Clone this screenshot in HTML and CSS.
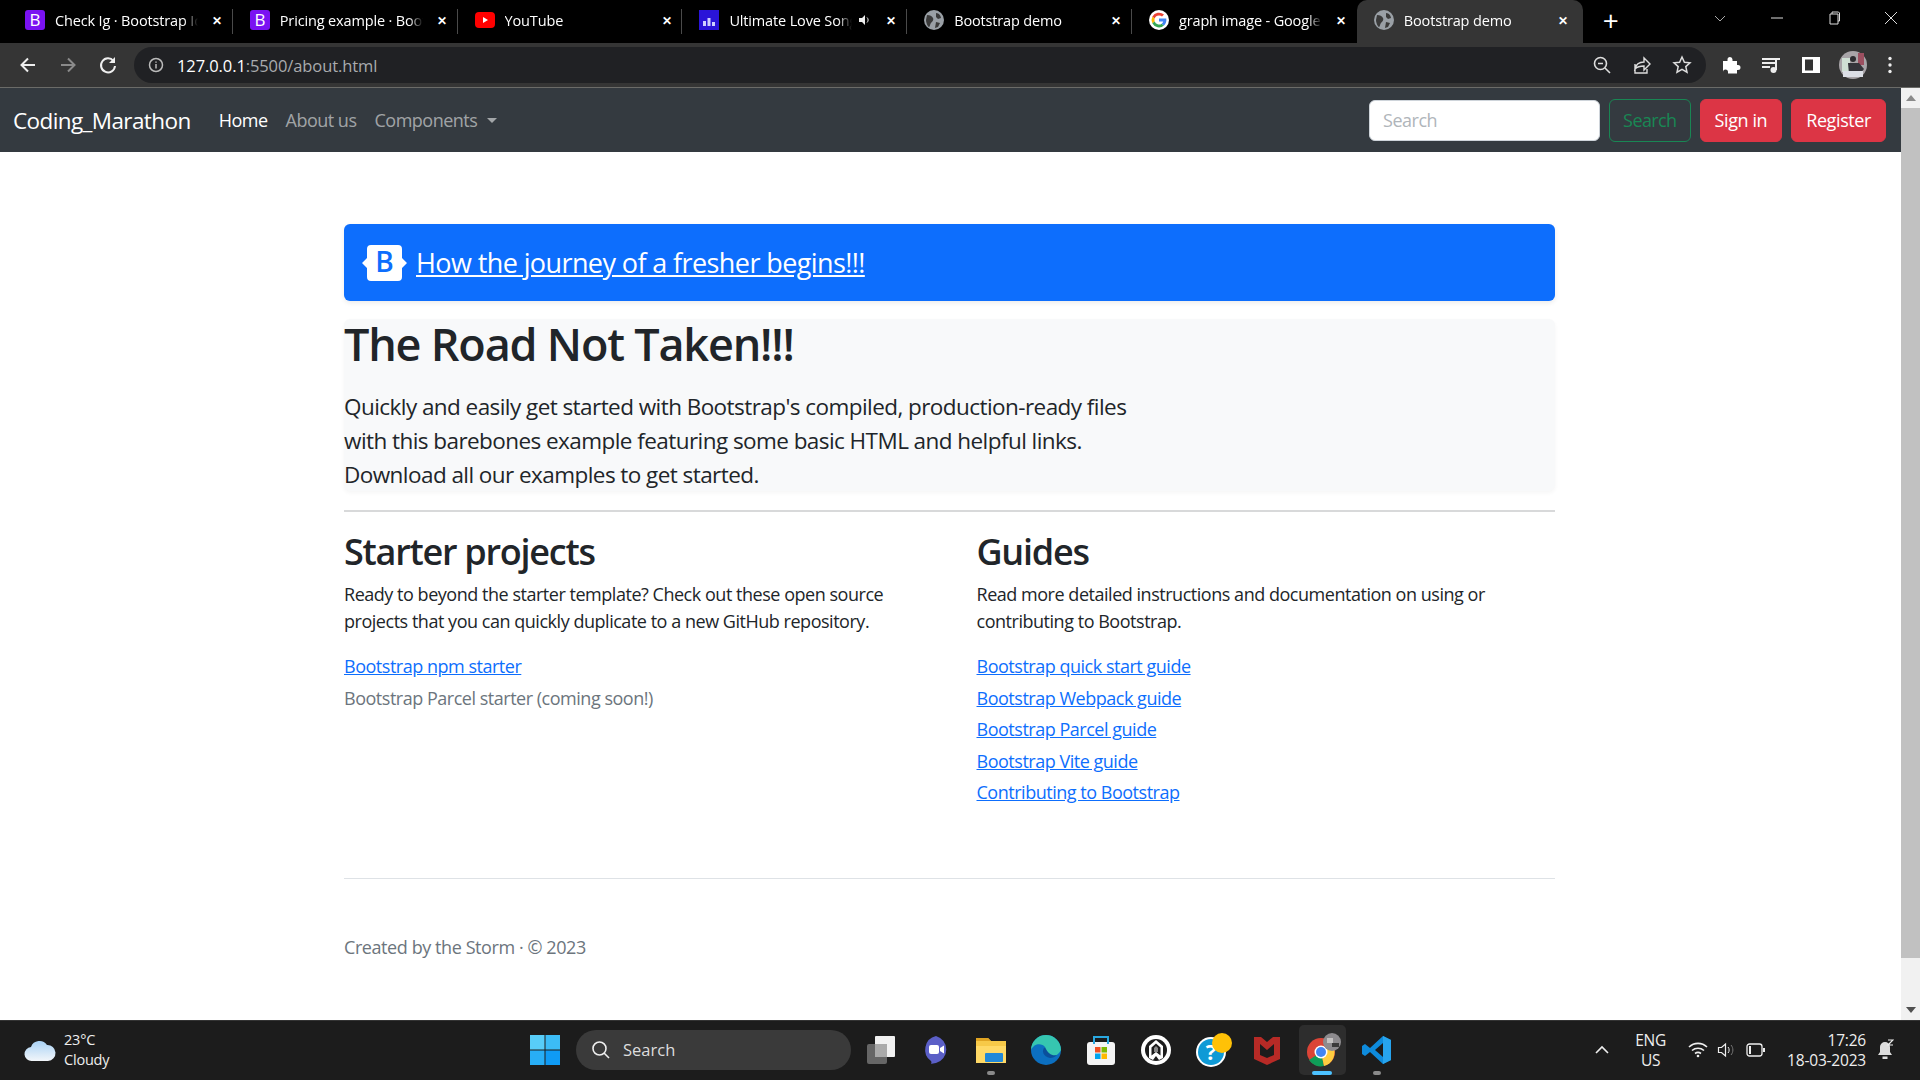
FILE: index.html
```html
<!DOCTYPE html>
<html lang="en">
<head>
  <meta charset="UTF-8" />
  <title>Bootstrap demo</title>
  <link rel="stylesheet" href="styles.css">
</head>
<body>
  <div class="tabstrip">
    <div class="tab">
      <svg class="fav" viewBox="0 0 20 20"><rect width="20" height="20" rx="3" fill="#7a12f2"/><text x="10" y="16" text-anchor="middle" class="favb">B</text></svg>
      <span class="tab-title">Check Ig · Bootstrap Icons</span><span class="tab-x">✕</span>
    </div>
    <div class="tab">
      <svg class="fav" viewBox="0 0 20 20"><rect width="20" height="20" rx="3" fill="#7a12f2"/><text x="10" y="16" text-anchor="middle" class="favb">B</text></svg>
      <span class="tab-title">Pricing example · Bootstrap</span><span class="tab-x">✕</span>
    </div>
    <div class="tab">
      <svg class="fav" viewBox="0 0 20 20"><rect y="2" width="20" height="16" rx="4" fill="#f00"/><path d="M8 7l5 3-5 3z" fill="#fff"/></svg>
      <span class="tab-title">YouTube</span><span class="tab-x">✕</span>
    </div>
    <div class="tab">
      <svg class="fav" viewBox="0 0 20 20"><rect width="20" height="20" fill="#2a14d8"/><path d="M4 11h3v5H4zM8.500 8h3v8h-3zM13 12h3v4h-3z" fill="#cfd0ff"/></svg>
      <span class="tab-title">Ultimate Love Songs</span>
      <svg class="mute" viewBox="0 0 14 14"><path d="M1 5h3l3-3v10l-3-3H1z" fill="#eee"/><path d="M9 4.500c1.500 1.500 1.500 3.500 0 5" stroke="#eee" fill="none"/></svg>
      <span class="tab-x">✕</span>
    </div>
    <div class="tab">
      <svg class="fav" viewBox="0 0 20 20"><use href="#globe"/></svg>
      <span class="tab-title">Bootstrap demo</span><span class="tab-x">✕</span>
    </div>
    <div class="tab">
      <svg class="fav" viewBox="0 0 20 20"><circle cx="10" cy="10" r="10" fill="#fff"/><path d="M10 5.500a4.500 4.500 0 0 1 3 1.100l2-2A7.500 7.500 0 0 0 3.300 6.700l2.400 1.900A4.500 4.500 0 0 1 10 5.500z" fill="#ea4335"/><path d="M3.300 6.700a7.500 7.500 0 0 0 0 6.600l2.400-1.900a4.500 4.500 0 0 1 0-2.800z" fill="#fbbc05"/><path d="M3.300 13.300A7.500 7.500 0 0 0 15 15.500l-2.300-1.800a4.500 4.500 0 0 1-7-2.300z" fill="#34a853"/><path d="M17.300 8.500H10v3h4.200a3.600 3.600 0 0 1-1.500 2.200l2.300 1.800c1.700-1.600 2.800-4 2.300-7z" fill="#4285f4"/></svg>
      <span class="tab-title">graph image - Google Search</span><span class="tab-x">✕</span>
    </div>
    <div class="tab tab-active">
      <svg class="fav" viewBox="0 0 20 20"><use href="#globe"/></svg>
      <span class="tab-title">Bootstrap demo</span><span class="tab-x">✕</span>
    </div>
    <span class="newtab">+</span>
    <div class="winctl">
      <svg viewBox="0 0 14 14"><path d="M2 5l5 5 5-5" stroke="#aaa" fill="none"/></svg>
      <svg viewBox="0 0 14 14"><path d="M1 7h12" stroke="#ddd"/></svg>
      <svg viewBox="0 0 14 14"><path d="M3 3h8v10H3zM5 3V1h6.500l1 1v8H11" stroke="#ddd" fill="none"/></svg>
      <svg viewBox="0 0 14 14"><path d="M1 1l12 12M13 1L1 13" stroke="#ddd"/></svg>
    </div>
  </div>

  <div class="toolbar">
    <svg class="tool" viewBox="0 0 20 20"><path d="M17 10H4M10 3.500L3.500 10l6.500 6.500" stroke="#eee" stroke-width="2" fill="none"/></svg>
    <svg class="tool" viewBox="0 0 20 20"><path d="M3 10h13M10 3.500l6.500 6.500-6.500 6.500" stroke="#8a8a8a" stroke-width="2" fill="none"/></svg>
    <svg class="tool" viewBox="0 0 20 20"><path d="M15.500 6A7 7 0 1 0 17 11" stroke="#eee" stroke-width="2" fill="none"/><path d="M17 2v6h-6z" fill="#eee"/></svg>
    <div class="omnibox">
      <svg class="info" viewBox="0 0 16 16"><circle cx="8" cy="8" r="6.500" stroke="#bbb" stroke-width="1.500" fill="none"/><path d="M8 7v4.500M8 4.500v1.200" stroke="#bbb" stroke-width="1.500"/></svg>
      <span class="url">127.0.0.1<span class="url-dim">:5500/about.html</span></span>
      <div class="omni-icons">
        <svg viewBox="0 0 20 20"><circle cx="8.500" cy="8.500" r="6" stroke="#ddd" stroke-width="1.600" fill="none"/><path d="M13 13l5 5M6 8.500h5" stroke="#ddd" stroke-width="1.600"/></svg>
        <svg viewBox="0 0 20 20"><path d="M3 9v9h12v-4M3 14c1-5 5-7 9-7V3l6 6-6 6v-4c-4 0-7 1-9 3z" stroke="#ddd" stroke-width="1.400" fill="none"/></svg>
        <svg viewBox="0 0 20 20"><path d="M10 2l2.400 5.200 5.600.6-4.200 3.800 1.200 5.600-5-2.900-5 2.900 1.200-5.600L2 7.800l5.600-.6z" stroke="#ddd" stroke-width="1.500" fill="none"/></svg>
      </div>
    </div>
    <div class="ext-icons">
      <svg viewBox="0 0 20 20"><path d="M2 6h4.500V4.500a2.500 2.500 0 0 1 5 0V6H16v4h1a2.500 2.500 0 0 1 0 5h-1v3.500H7V17a2.500 2.500 0 0 0-5 0z" fill="#fff"/></svg>
      <svg viewBox="0 0 20 20"><path d="M1 4h13M1 8h13M1 12h8" stroke="#eee" stroke-width="1.800"/><path d="M15 4h4M15 3v12" stroke="#eee" stroke-width="2" fill="none"/><circle cx="12.500" cy="15" r="3" fill="#eee"/></svg>
      <svg viewBox="0 0 20 20"><rect x="1" y="2" width="18" height="16" fill="#fff"/><rect x="4" y="4.500" width="8" height="11" fill="#333"/></svg>
      <svg class="avatar" viewBox="0 0 28 28"><circle cx="14" cy="14" r="14" fill="#a8a4a8"/><path d="M3 7h8v14H3z" fill="#cfe0d4"/><path d="M19 2h6v12h-6z" fill="#9c4f60"/><circle cx="14" cy="8" r="3" fill="#2c2c30"/><path d="M9 12h11l5 6-4 5H10z" fill="#34343a"/><path d="M4 20h20v6H4z" fill="#dcdfe6"/></svg>
      <svg class="dots" viewBox="0 0 6 20"><circle cx="3" cy="3.500" r="1.700" fill="#eee"/><circle cx="3" cy="10" r="1.700" fill="#eee"/><circle cx="3" cy="16.500" r="1.700" fill="#eee"/></svg>
    </div>
  </div>

  <div class="viewport">
    <div class="page">
      <nav class="navbar">
        <a class="brand">Coding_Marathon</a>
        <a class="nav-link active">Home</a>
        <a class="nav-link">About us</a>
        <a class="nav-link">Components<i class="caret"></i></a>
        <div class="nav-right">
          <input class="search" type="search" placeholder="Search" />
          <button class="btn btn-green">Search</button>
          <button class="btn btn-red">Sign in</button>
          <button class="btn btn-red">Register</button>
        </div>
      </nav>

      <main class="container">
        <div class="banner">
          <svg class="logo" viewBox="0 0 45 36"><path d="M9 0h27a4 4 0 0 1 4 4v9l5 5-5 5v9a4 4 0 0 1-4 4H9a4 4 0 0 1-4-4v-9l-5-5 5-5V4a4 4 0 0 1 4-4z" fill="#fff"/><text x="22.500" y="27" text-anchor="middle" class="logob">B</text></svg>
          <a class="banner-link">How the journey of a fresher begins!!!</a>
        </div>
        <div class="jumbo">
          <h1>The Road Not Taken!!!</h1>
          <p class="lead">Quickly and easily get started with Bootstrap's compiled, production-ready files<br>with this barebones example featuring some basic HTML and helpful links.<br>Download all our examples to get started.</p>
        </div>
        <hr class="rule">
        <div class="cols">
          <section>
            <h2>Starter projects</h2>
            <p>Ready to beyond the starter template? Check out these open source<br>projects that you can quickly duplicate to a new GitHub repository.</p>
            <ul>
              <li><a>Bootstrap npm starter</a></li>
              <li class="muted">Bootstrap Parcel starter (coming soon!)</li>
            </ul>
          </section>
          <section>
            <h2>Guides</h2>
            <p>Read more detailed instructions and documentation on using or<br>contributing to Bootstrap.</p>
            <ul>
              <li><a>Bootstrap quick start guide</a></li>
              <li><a>Bootstrap Webpack guide</a></li>
              <li><a>Bootstrap Parcel guide</a></li>
              <li><a>Bootstrap Vite guide</a></li>
              <li><a>Contributing to Bootstrap</a></li>
            </ul>
          </section>
        </div>
        <footer class="foot">Created by the Storm · © 2023</footer>
      </main>
    </div>
    <div class="scrollbar">
      <span class="arrow up"></span>
      <div class="thumb"></div>
      <span class="arrow down"></span>
    </div>
  </div>

  <div class="taskbar">
    <div class="weather">
      <svg viewBox="0 0 32 24"><defs><linearGradient id="cl" x1="0" y1="0" x2="0" y2="1"><stop offset="0" stop-color="#a9d2f5"/><stop offset="1" stop-color="#f2f6fa"/></linearGradient></defs><path d="M8 23a7 7 0 0 1-1-14 9 9 0 0 1 16-2 8 8 0 0 1 1 16z" fill="url(#cl)"/></svg>
      <div class="weather-text"><span>23°C</span><span>Cloudy</span></div>
    </div>
    <div class="task-center">
      <svg class="win" viewBox="0 0 30 30"><rect width="14.500" height="14.500" fill="#58cdf8"/><rect x="15.500" width="14.500" height="14.500" fill="#3cbcf6"/><rect y="15.500" width="14.500" height="14.500" fill="#28aef6"/><rect x="15.500" y="15.500" width="14.500" height="14.500" fill="#0f9bf5"/></svg>
      <div class="task-search">
        <svg viewBox="0 0 20 20"><circle cx="8.500" cy="8.500" r="6.500" stroke="#eee" stroke-width="1.600" fill="none"/><path d="M13 13l5 5" stroke="#eee" stroke-width="1.600"/></svg>
        <span>Search</span>
      </div>
      <div class="app"><svg viewBox="0 0 30 30"><rect x="1" y="9" width="20" height="20" rx="2" fill="#666"/><rect x="9" y="1" width="20" height="21" rx="1" fill="#f1f1f1"/><rect x="9" y="9" width="12" height="13" fill="#aaa"/></svg></div>
      <div class="app"><svg viewBox="0 0 30 30"><path d="M15 1a14 14 0 0 1 0 27c-2 0-4 1-5 1 0 0 1-2 0-3A14 14 0 0 1 15 1z" fill="#5b5fc7"/><rect x="8" y="10" width="10" height="9" rx="2" fill="#fff"/><path d="M19 13l4-2.500v8L19 16z" fill="#fff"/></svg></div>
      <div class="app dot"><svg viewBox="0 0 30 30"><path d="M0 3h12l3 3h15v22H0z" fill="#f7c948"/><path d="M0 3h12l3 3H0z" fill="#e0a422"/><rect y="11" width="30" height="17" fill="#ffd966"/><rect x="9" y="18" width="18" height="9" rx="1" fill="#2188d8"/></svg></div>
      <div class="app"><svg viewBox="0 0 30 30"><circle cx="15" cy="15" r="15" fill="#0c6fc0"/><path d="M30 15a15 15 0 0 0-30 0c3-7 11-7 14-3-3 3-1 10 5 10 5 0 9-3 11-7z" fill="#36c6b0"/><path d="M14 12c-4 3-2 10 5 11 3 0 5-1 7-3-5 1-9-1-12-8z" fill="#0a4f9c"/></svg></div>
      <div class="app"><svg viewBox="0 0 30 30"><rect x="1" y="7" width="28" height="23" rx="3" fill="#f4f4f4"/><path d="M8 9V2h14v7" stroke="#29a8e0" stroke-width="2" fill="none"/><rect x="9" y="12" width="5.500" height="5.500" fill="#f25022"/><rect x="15.500" y="12" width="5.500" height="5.500" fill="#7fba00"/><rect x="9" y="18.500" width="5.500" height="5.500" fill="#00a4ef"/><rect x="15.500" y="18.500" width="5.500" height="5.500" fill="#ffb900"/></svg></div>
      <div class="app"><svg viewBox="0 0 30 30"><circle cx="15" cy="15" r="15" fill="#fff"/><circle cx="15" cy="15" r="11" fill="#1c1c1c"/><path d="M15 5l7 6v12l-4 2-3-4-3 4-4-2V11z" fill="#fff"/><path d="M15 8.500l4.500 4v8L15 17l-4.500 3.500v-8z" fill="#1c1c1c"/><path d="M15 11l2 2v4h-4v-4z" fill="#888"/></svg></div>
      <div class="app"><svg class="wide" viewBox="0 0 36 34"><circle cx="15" cy="19" r="15" fill="#fff"/><circle cx="15" cy="19" r="13" fill="#0f9ad6"/><text x="15" y="27" text-anchor="middle" class="helpq">?</text><circle cx="26" cy="10" r="10" fill="#ffc107"/></svg></div>
      <div class="app"><svg viewBox="0 0 28 30"><path d="M1 2h7l6 5 6-5h7v22l-13 6L1 24z" fill="#b72a26"/><path d="M7 9l7 6 7-6v11l-7 3-7-3z" fill="#1c1c1c"/></svg></div>
      <div class="app app-on"><svg class="wide" viewBox="0 0 36 34"><circle cx="15" cy="19" r="14" fill="#db4437"/><path d="M15 19L3 27a14 14 0 0 0 15 6z" fill="#0f9d58"/><path d="M15 19l3 14a14 14 0 0 0 9-20z" fill="#ffcd40"/><circle cx="15" cy="19" r="6.500" fill="#fff"/><circle cx="15" cy="19" r="5" fill="#4285f4"/><circle cx="26" cy="9" r="9" fill="#8d8b8e"/><path d="M21 5h6v5h-6z" fill="#c4c2c2"/><path d="M26 10h7v4h-7z" fill="#3a3a3a"/></svg></div>
      <div class="app dot"><svg viewBox="0 0 30 30"><path d="M21 1l8 4v20l-8 4L8 17l-5 4-3-2v-8l3-2 5 4z" fill="#0e8bdc"/><path d="M21 8l-8 7 8 7z" fill="#1c1c1c"/><path d="M21 1l8 4v20l-8 4z" fill="#27a4ee"/></svg></div>
    </div>
    <div class="tray">
      <svg class="chev" viewBox="0 0 14 10"><path d="M1 8l6-6 6 6" stroke="#eee" stroke-width="1.600" fill="none"/></svg>
      <div class="lang"><span>ENG</span><span>US</span></div>
      <svg class="tray-ic" viewBox="0 0 20 16"><path d="M1 5a13 13 0 0 1 18 0M4 8.500a9 9 0 0 1 12 0M7 11.500a5 5 0 0 1 6 0" stroke="#eee" stroke-width="1.600" fill="none"/><circle cx="10" cy="14" r="1.300" fill="#eee"/></svg>
      <svg class="tray-ic" viewBox="0 0 20 16"><path d="M1.500 5.500h3l4-3.500v12l-4-3.500h-3z" stroke="#eee" stroke-width="1.200" fill="none"/><path d="M11 5c1.500 1.500 1.500 4.500 0 6" stroke="#eee" fill="none"/><path d="M14 3c2.500 3 2.500 7 0 10" stroke="#777" fill="none"/></svg>
      <svg class="tray-ic" viewBox="0 0 20 14"><rect x="1" y="1" width="15" height="12" rx="2.500" stroke="#eee" stroke-width="1.300" fill="none"/><rect x="3" y="3" width="2" height="8" fill="#eee"/><rect x="17" y="5" width="2" height="4" fill="#eee"/></svg>
      <div class="clock"><span>17:26</span><span>18-03-2023</span></div>
      <svg class="bell" viewBox="0 0 18 22"><path d="M9 3a5 5 0 0 1 5 5v5l2 3H2l2-3V8a5 5 0 0 1 5-5z" fill="#ddd"/><rect x="6.500" y="17.500" width="5" height="2.500" fill="#ddd"/><path d="M12 1h5l-5 5h5" stroke="#eee" stroke-width="1.200" fill="none"/></svg>
    </div>
  </div>

  <svg class="defs" width="0" height="0"><defs><g id="globe"><circle cx="10" cy="10" r="10" fill="#9aa0a6"/><path d="M3 5c3 0 5 1 6 3s-1 4-2 5-1 4-2 4-3-4-3-7zM12 3c3 0 5 3 5 5l-3 1-2-2zM12 12l4 1-2 4-3 1z" fill="#3a3a3a"/></g></defs></svg>
</body>
</html>
```
FILE: styles.css
```css
* { box-sizing: border-box; }

html, body {
  margin: 0;
  height: 100%;
  overflow: hidden;
}

body {
  display: flex;
  flex-direction: column;
  height: 1080px;
  font-family: "Open Sans", "Noto Sans", sans-serif;
  color: #212529;
  background: #fff;
}

/* browser chrome */
.tabstrip {
  display: flex;
  align-items: center;
  height: 43px;
  background: #000;
  padding-left: 8px;
  flex: none;
}

.tab {
  display: flex;
  align-items: center;
  width: 224.800px;
  height: 43px;
  padding: 0 11px 3px 17px;
  color: #fff;
  font-size: 14.500px;
  letter-spacing: -0.15px;
  background: linear-gradient(#4a4a4a, #4a4a4a) right 9px / 1px 25px no-repeat;
  flex: none;
}

.tab:nth-child(6) { background: none; }

.tab-active {
  background: #353535;
  border-radius: 10px 10px 0 0;
  width: 226px;
  padding-right: 15px;
}

.fav {
  width: 20px;
  height: 20px;
  flex: none;
  margin-right: 10px;
}

.favb {
  font: 17px "Open Sans", sans-serif;
  fill: #fff;
}

.tab-title {
  flex: 1;
  white-space: nowrap;
  overflow: hidden;
  min-width: 0;
  -webkit-mask-image: linear-gradient(to left, transparent, #000 14px);
  mask-image: linear-gradient(to left, transparent, #000 14px);
}

.tab-x {
  font-size: 12px;
  margin-left: 14px;
  font-weight: 700;
}

.mute {
  width: 14px;
  height: 14px;
  margin-left: 6px;
  flex: none;
}

.newtab {
  color: #fff;
  font-size: 28px;
  line-height: 1;
  margin-left: 20px;
  padding-bottom: 3px;
}

.winctl {
  margin-left: auto;
  display: flex;
  align-items: center;
  gap: 43px;
  padding: 0 22px 7px 0;
}

.winctl svg {
  width: 14px;
  height: 14px;
}

.toolbar {
  display: flex;
  align-items: center;
  height: 45px;
  background: #353535;
  border-bottom: 1px solid #6b6b68;
  padding-left: 18px;
  flex: none;
}

.tool {
  width: 20px;
  height: 20px;
  margin-right: 20px;
  flex: none;
}

.omnibox {
  display: flex;
  align-items: center;
  width: 1572px;
  height: 36px;
  margin-left: -4px;
  padding: 0 14px;
  background: #202124;
  border-radius: 18px;
}

.info {
  width: 16px;
  height: 16px;
  margin-right: 13px;
}

.url {
  color: #fff;
  font-size: 16.500px;
  letter-spacing: -0.1px;
}

.url-dim { color: #a9abae; }

.omni-icons {
  margin-left: auto;
  display: flex;
  gap: 20px;
}

.omni-icons svg {
  width: 20px;
  height: 20px;
}

.ext-icons {
  display: flex;
  align-items: center;
  gap: 20px;
  margin-left: 15px;
}

.ext-icons svg {
  width: 20px;
  height: 20px;
}

.ext-icons .avatar {
  width: 28px;
  height: 28px;
  margin-left: -2px;
  margin-right: -2px;
}

.ext-icons .dots {
  width: 6px;
  margin-left: 2px;
}

/* page */
.viewport {
  flex: 1;
  display: flex;
  min-height: 0;
}

.page {
  flex: 1;
  min-width: 0;
}

.navbar {
  display: flex;
  align-items: center;
  height: 64px;
  padding: 0 15px 0 13px;
  background: #343a40;
}

.brand {
  color: #fff;
  font-size: 22.500px;
  margin-right: 19px;
  letter-spacing: -0.6px;
}

.nav-link {
  color: rgba(255, 255, 255, .55);
  font-size: 18px;
  margin: 0 9px;
  letter-spacing: -0.5px;
}

.nav-link.active { color: #fff; }

.caret {
  display: inline-block;
  margin-left: 10px;
  vertical-align: 4px;
  border-top: 5.500px solid;
  border-left: 5.500px solid transparent;
  border-right: 5.500px solid transparent;
}

.nav-right {
  margin-left: auto;
  display: flex;
  align-items: center;
  gap: 9px;
}

.search {
  width: 231px;
  height: 41px;
  padding: 0 13px;
  border: 1px solid #ced4da;
  border-radius: 6px;
  font: 18px "Open Sans", sans-serif;
  letter-spacing: -0.5px;
}

.search::placeholder { color: #b0b5ba; }

.btn {
  height: 43px;
  padding: 0 14px;
  border-radius: 6px;
  font: 18px "Open Sans", sans-serif;
  letter-spacing: -0.4px;
  border: 1px solid;
}

.btn-green {
  color: #198754;
  border-color: #198754;
  background: transparent;
  padding: 0 13px;
  letter-spacing: -0.6px;
}

.btn-red {
  color: #fff;
  background: #dc3545;
  border-color: #dc3545;
}

.scrollbar {
  width: 19px;
  background: #f1f1f1;
  display: flex;
  flex-direction: column;
  align-items: center;
  flex: none;
}

.arrow {
  width: 0;
  height: 0;
  margin: 7px 0;
  border-left: 5px solid transparent;
  border-right: 5px solid transparent;
}

.arrow.up { border-bottom: 6px solid #8a8a8a; }
.arrow.down { border-top: 6px solid #505050; }

.thumb {
  width: 100%;
  height: 850px;
  background: #c1c1c1;
  margin-bottom: auto;
}

.container {
  width: 1211px;
  margin-left: 344px;
  padding-top: 72px;
}

.banner {
  display: flex;
  align-items: center;
  height: 77px;
  padding-left: 18px;
  background: #0d6efd;
  border-radius: 6px;
  box-shadow: 0 2px 5px rgba(0, 0, 0, .08);
}

.logo {
  width: 45px;
  height: 36px;
  margin-right: 9px;
}

.logob {
  font: 600 28px "Open Sans", sans-serif;
  fill: #0d6efd;
}

.banner-link {
  color: #fff;
  font-size: 27px;
  text-decoration: underline;
  letter-spacing: -0.6px;
}

.jumbo {
  margin-top: 18px;
  height: 172px;
  background: #f8f9fa;
  border-radius: 6px;
  box-shadow: 0 2px 4px rgba(0, 0, 0, .04);
}

h1 {
  margin: 0;
  font-size: 45px;
  font-weight: 600;
  line-height: 50px;
  letter-spacing: -1.200px;
}

.lead {
  margin: 21px 0 0;
  font-size: 22.500px;
  line-height: 33.750px;
  letter-spacing: -0.560px;
}

.rule {
  margin: 19px 0 0;
  border: 0;
  border-top: 2px solid #d8d9da;
}

.cols {
  display: grid;
  grid-template-columns: 1fr 1fr;
  column-gap: 54px;
  margin-top: 18px;
  height: 348px;
}

h2 {
  margin: 0 0 8px;
  font-size: 36px;
  font-weight: 600;
  line-height: 43px;
  letter-spacing: -1.250px;
}

.cols p {
  margin: 0 0 18px;
  font-size: 18px;
  line-height: 27px;
  letter-spacing: -0.470px;
}

.cols ul {
  margin: 0;
  padding: 0;
  list-style: none;
  font-size: 18px;
  line-height: 27px;
  letter-spacing: -0.480px;
}

.cols li { margin-bottom: 4.500px; }

.cols a {
  color: #0d6efd;
  text-decoration: underline;
}

.muted { color: #6c757d; }

.foot {
  border-top: 1px solid #dee2e6;
  padding-top: 55px;
  font-size: 18px;
  line-height: 27px;
  color: #6c757d;
  letter-spacing: -0.420px;
}

/* windows taskbar */
.taskbar {
  display: flex;
  align-items: center;
  height: 60px;
  padding-bottom: 2px;
  background: #1c1c1c;
  border-top: 1px solid #333;
  flex: none;
}

.weather {
  display: flex;
  align-items: center;
  padding-left: 24px;
  width: 400px;
}

.weather svg {
  width: 32px;
  height: 24px;
  margin-right: 8px;
}

.weather-text, .lang, .clock {
  display: flex;
  flex-direction: column;
  color: #eee;
  font-size: 14.500px;
  line-height: 20px;
  letter-spacing: -0.2px;
}

.task-center {
  display: flex;
  align-items: center;
  margin-left: 130px;
}

.win {
  width: 30px;
  height: 30px;
  margin-right: 16px;
}

.task-search {
  display: flex;
  align-items: center;
  gap: 12px;
  width: 275px;
  height: 40px;
  padding-left: 15px;
  background: #3a3a3a;
  border-radius: 20px;
  color: #ddd;
  font-size: 16.500px;
  margin-right: 6px;
}

.task-search svg {
  width: 20px;
  height: 20px;
}

.app {
  position: relative;
  display: flex;
  align-items: center;
  justify-content: center;
  width: 47px;
  height: 50px;
  margin-right: 8.200px;
}

.app svg { width: 30px; height: 30px; }
.app .wide { width: 36px; height: 34px; margin-left: 4px; }

.app-on {
  background: #2d2d2d;
  border-radius: 5px;
}

.app-on::after, .dot::after {
  content: "";
  position: absolute;
  bottom: 0;
  left: 50%;
  width: 8px;
  height: 4px;
  margin-left: -4px;
  border-radius: 2px;
  background: #8a8a8a;
}

.app-on::after {
  width: 20px;
  margin-left: -10px;
  background: #4cc2ff;
}

.tray {
  margin-left: auto;
  display: flex;
  align-items: center;
  color: #eee;
}

.chev {
  width: 14px;
  height: 10px;
  margin-right: 26px;
}

.lang {
  align-items: center;
  font-size: 15.500px;
  margin-right: 22px;
}

.tray-ic {
  width: 20px;
  height: 16px;
  margin-right: 9px;
}

.clock {
  align-items: flex-end;
  font-size: 15.500px;
  margin-left: 12px;
  margin-right: 10px;
}

.bell {
  width: 18px;
  height: 22px;
  margin-right: 26px;
}

.helpq {
  font: 700 22px "Open Sans", sans-serif;
  fill: #fff;
}

.defs { position: absolute; }
```
